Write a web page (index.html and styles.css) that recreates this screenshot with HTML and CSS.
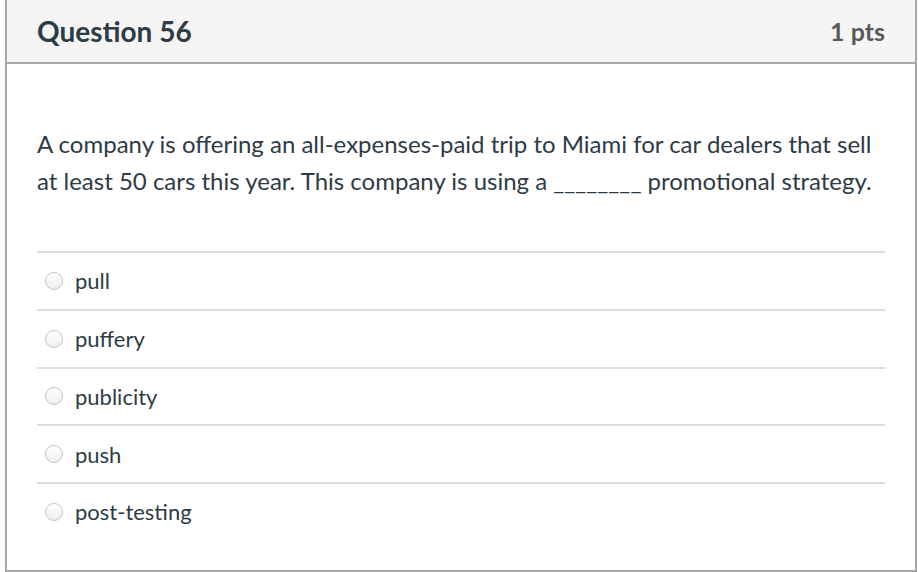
FILE: index.html
```html
<!DOCTYPE html>
<html>
<head>
<meta charset="utf-8">
<link rel="stylesheet" href="styles.css">
</head>
<body>
<div class="card">
  <div class="card-header">
    <span class="q-title">Question 56</span>
    <span class="q-points">1 pts</span>
  </div>
  <div class="card-body">
    <p class="q-text">A company is offering an all-expenses-paid trip to Miami for car dealers that sell at least 50 cars this year. This company is using a ________ promotional strategy.</p>
    <div class="answers">
      <label class="answer"><span class="radio"></span><span class="answer-text">pull</span></label>
      <label class="answer"><span class="radio"></span><span class="answer-text">puffery</span></label>
      <label class="answer"><span class="radio"></span><span class="answer-text">publicity</span></label>
      <label class="answer"><span class="radio"></span><span class="answer-text">push</span></label>
      <label class="answer"><span class="radio"></span><span class="answer-text">post-testing</span></label>
    </div>
  </div>
</div>
</body>
</html>
```
FILE: styles.css
```css
html, body {
  margin: 0;
  padding: 0;
  background: #ffffff;
}
body {
  font-family: Lato, "Noto Sans", sans-serif;
  color: #2d3b45;
}
.card {
  margin: 0 1px 0 5px;
  border: 2px solid #a8a8a8;
  border-top: none;
  height: 572px;
  box-sizing: border-box;
  display: flex;
  flex-direction: column;
}
.card-header {
  height: 64px;
  box-sizing: border-box;
  background: #f5f5f5;
  border-bottom: 2px solid #a8a8a8;
  display: flex;
  align-items: center;
  justify-content: space-between;
  padding: 0 30px 0 30px;
  flex: none;
}
.q-title {
  font-size: 28px;
  font-weight: 700;
  color: #2d3b45;
}
.q-points {
  font-size: 25px;
  font-weight: 700;
  color: #5a5a5a;
}
.card-body {
  flex: 1;
  padding: 0 30px;
}
.q-text {
  margin: 61px 0 0 0;
  font-size: 24px;
  line-height: 37px;
  color: #2d3b45;
}
.answers {
  margin-top: 52px;
}
.answer {
  display: flex;
  align-items: center;
  height: 55.75px;
  border-top: 2px solid #dcdcdc;
}
.radio {
  width: 18px;
  height: 18px;
  border-radius: 50%;
  border: 1px solid #c4c4c4;
  background: linear-gradient(#ffffff, #eeeeee);
  box-sizing: border-box;
  margin: 0 12px 0 8px;
  flex: none;
}
.answer-text {
  font-size: 22px;
}
```
